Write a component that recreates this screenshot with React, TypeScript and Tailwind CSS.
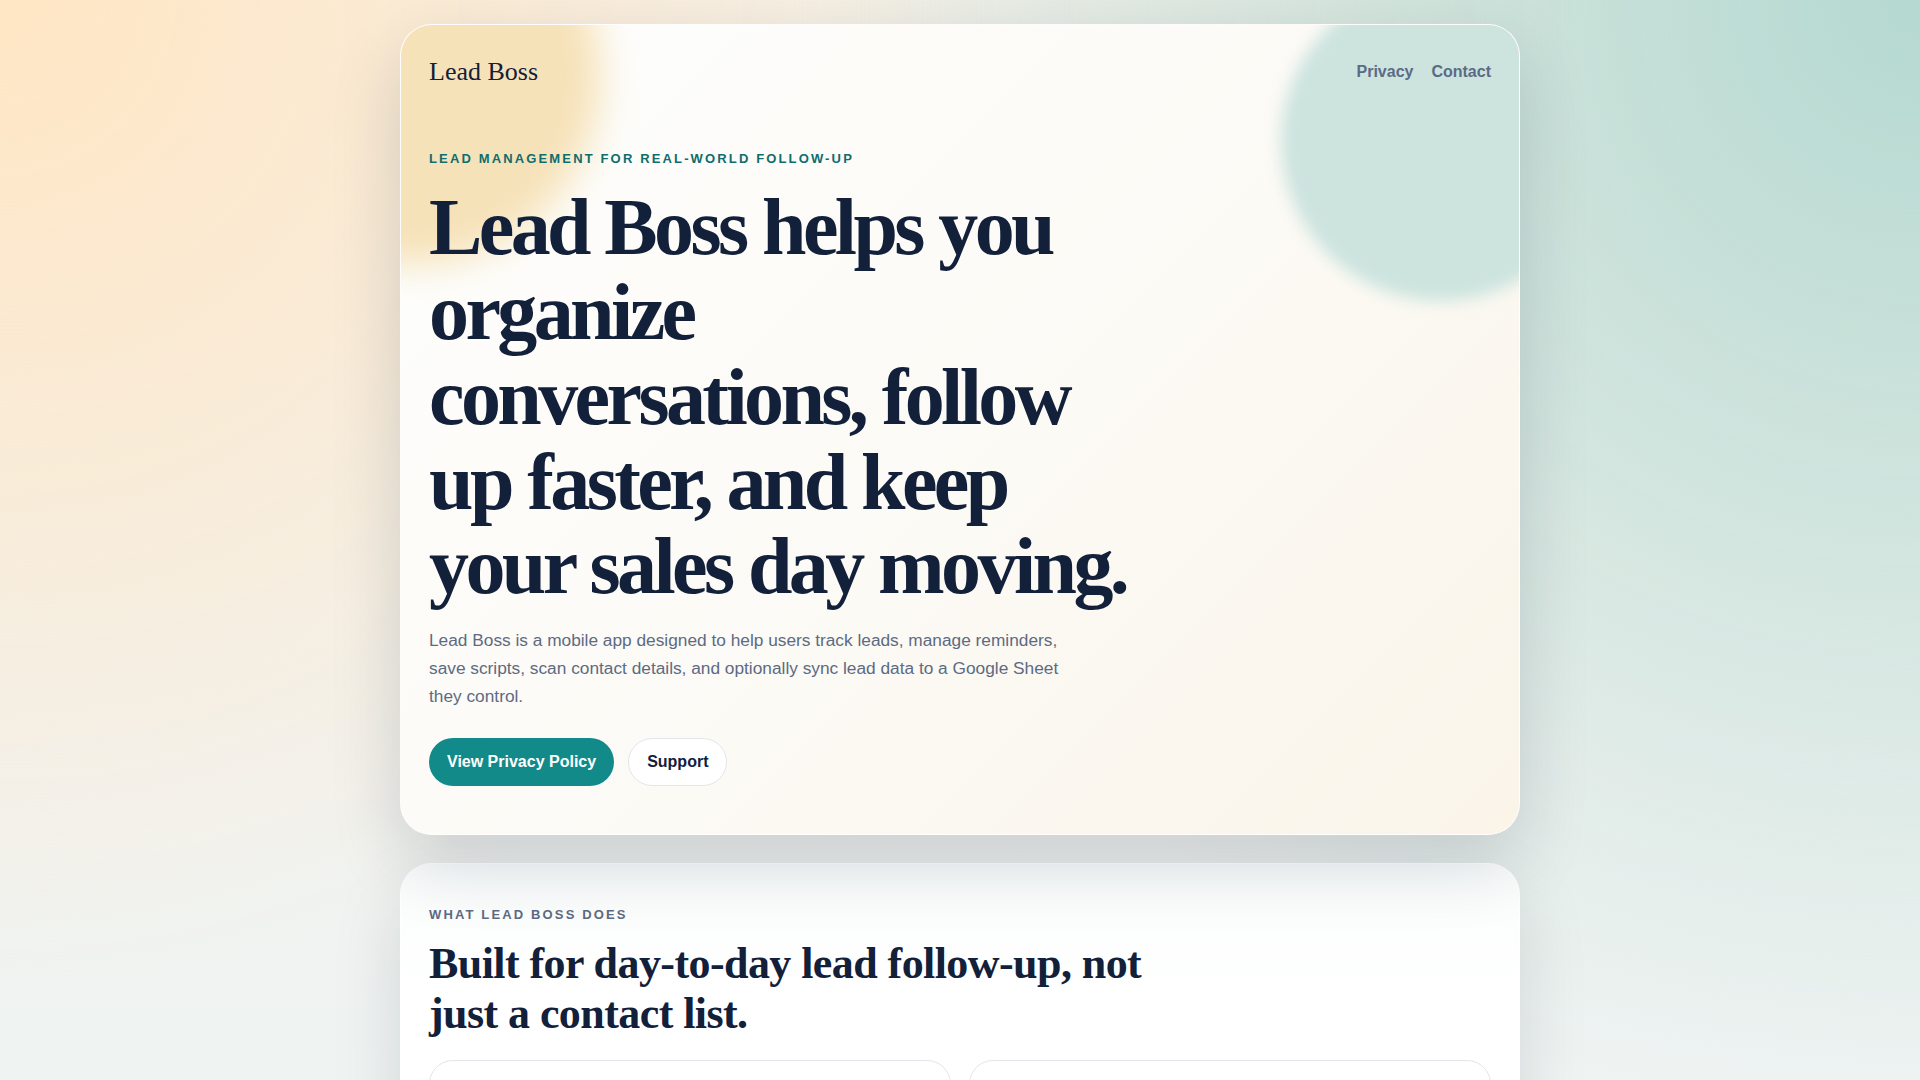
import { ShieldCheck, LifeBuoy } from 'lucide-react';

const serif = "font-['Liberation_Serif',_'Times_New_Roman',_serif]";
const sans = "font-['Liberation_Sans',_Arial,_sans-serif]";

const features = [
  {
    title: 'Track every lead',
    body: 'Keep names, notes, status and next steps together so nothing slips between calls.',
    Icon: ShieldCheck,
  },
  {
    title: 'Never miss a follow-up',
    body: 'Set reminders and see what needs attention today without digging through messages.',
    Icon: LifeBuoy,
  },
];

function Hero() {
  return (
    <section className="relative overflow-hidden rounded-[32px] border border-white/70 bg-[linear-gradient(135deg,#fefefd_0%,#fcfaf5_55%,#faf4e9_100%)] px-7 pt-[31px] pb-12 shadow-[0_28px_70px_rgba(15,23,42,0.16)]">
      {/* soft colour blobs */}
      <div className="pointer-events-none absolute left-[-180px] top-[-140px] h-[380px] w-[380px] rounded-full bg-[#f6e2b9] blur-[18px]" />
      <div className="pointer-events-none absolute left-[880px] top-[-44px] h-[320px] w-[320px] rounded-full bg-[#cce3de] blur-[8px]" />

      <div className="relative">
        <header className="flex items-center justify-between">
          <a href="#" className={`${serif} text-[26px] leading-[1.2] text-[#13203a]`}>
            Lead Boss
          </a>
          <nav className={`${sans} flex items-center gap-[18px] text-base leading-6 font-bold text-[#5b6b85]`}>
            <a href="#">Privacy</a>
            <a href="#">Contact</a>
          </nav>
        </header>

        <p className={`${sans} mt-[62px] text-[13px] leading-5 font-bold uppercase tracking-[0.165em] text-[#0f6d6c]`}>
          Lead management for real-world follow-up
        </p>

        <h1 className={`${serif} mt-4 max-w-[705px] text-[80px] leading-[1.06] font-bold tracking-[-0.045em] text-[#13203a]`}>
          Lead Boss helps you organize conversations, follow up faster, and keep your sales day moving.
        </h1>

        <p className={`${sans} mt-[17px] max-w-[650px] text-[17.3px] leading-7 text-[#5c6b83]`}>
          Lead Boss is a mobile app designed to help users track leads, manage reminders, save scripts, scan
          contact details, and optionally sync lead data to a Google Sheet they control.
        </p>

        <div className={`${sans} mt-7 flex items-center gap-[14px]`}>
          <a
            href="#"
            className="rounded-full bg-[#128a89] px-[18px] py-3 text-base leading-6 font-bold text-white"
          >
            View Privacy Policy
          </a>
          <a
            href="#"
            className="rounded-full border border-[#e3e6ea] bg-white px-[18px] py-[11px] text-base leading-6 font-bold text-[#13203a]"
          >
            Support
          </a>
        </div>
      </div>
    </section>
  );
}

function WhatItDoes() {
  return (
    <section className="mt-7 rounded-[32px] border border-white/70 bg-[linear-gradient(180deg,#fafcfc_0%,#ffffff_30%)] px-7 pt-[41px] pb-10 shadow-[0_28px_70px_rgba(15,23,42,0.13)]">
      <p className={`${sans} text-[13px] leading-5 font-bold uppercase tracking-[0.165em] text-[#5c6b83]`}>
        What Lead Boss does
      </p>
      <h2 className={`${serif} mt-[14px] max-w-[720px] text-[44px] leading-[50px] font-bold tracking-[-0.013em] text-[#13203a]`}>
        Built for day-to-day lead follow-up, not just a contact list.
      </h2>

      <div className="mt-[21px] grid grid-cols-2 gap-[18px]">
        {features.map(({ title, body, Icon }) => (
          <div key={title} className="rounded-3xl border border-[#e2e6ea] bg-white p-7">
            <Icon className="h-6 w-6 text-[#128a89]" />
            <h3 className={`${serif} mt-4 text-2xl font-bold text-[#13203a]`}>{title}</h3>
            <p className={`${sans} mt-2 text-base leading-7 text-[#5c6b83]`}>{body}</p>
          </div>
        ))}
      </div>
    </section>
  );
}

export default function App() {
  return (
    <div className="min-h-screen bg-[radial-gradient(circle_at_0%_0%,#ffe6c4_0%,rgba(255,230,196,0)_42%),radial-gradient(circle_at_100%_0%,#b4d9d1_0%,rgba(180,217,209,0)_48%),linear-gradient(180deg,#f5f1ea_0%,#eef4f5_100%)] pt-6 pb-16">
      <main className="mx-auto w-[1120px]">
        <Hero />
        <WhatItDoes />
      </main>
    </div>
  );
}
